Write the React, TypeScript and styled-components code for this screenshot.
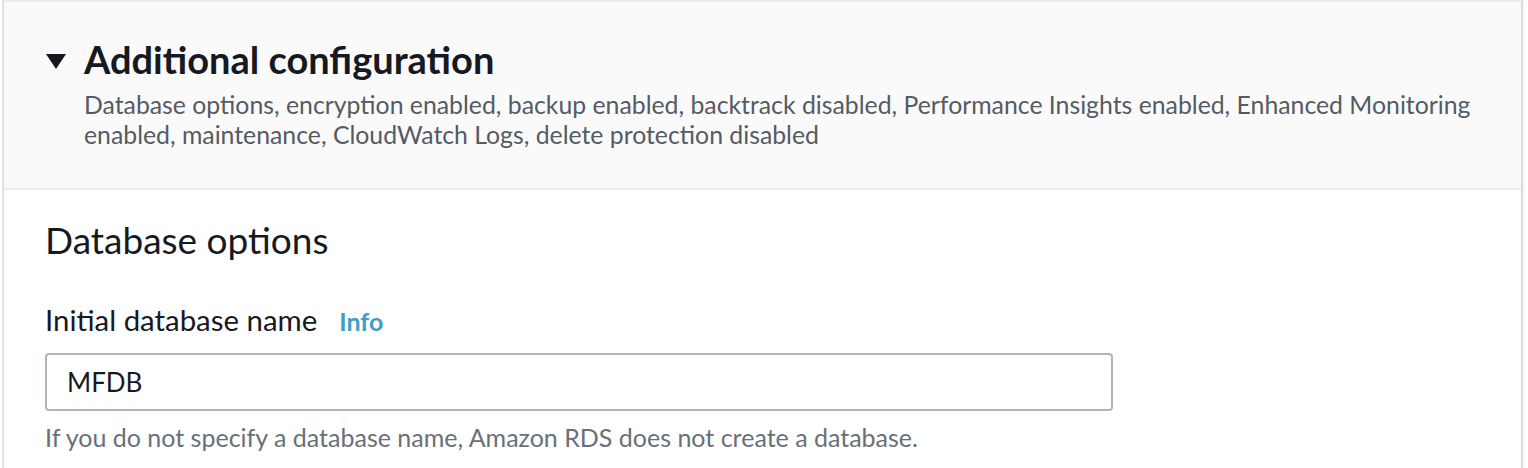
import React from "react";
import styled, { createGlobalStyle } from "styled-components";

const GlobalStyle = createGlobalStyle`
  html, body {
    margin: 0;
    padding: 0;
    background: #ffffff;
  }
  body {
    font-family: Lato, "Open Sans", "Noto Sans", sans-serif;
    -webkit-font-smoothing: antialiased;
  }
`;

const Page = styled.div`
  padding: 0 6px 0 3px;
  height: 468px;
  overflow: hidden;
`;

const Card = styled.section`
  border-top: 2px solid #eaeded;
  border-left: 1px solid #d5dbdb;
  border-right: 1px solid #d5dbdb;
  box-shadow: 1px 0 2px rgba(0, 28, 36, 0.18), -1px 0 1px rgba(0, 28, 36, 0.08);
  background: #ffffff;
  min-height: 470px;
`;

const Header = styled.div`
  background: #fafafa;
  padding: 35px 30px 38px 42px;
  border-bottom: 2px solid #eaeded;
`;

const TitleRow = styled.div`
  display: flex;
  align-items: flex-start;
  gap: 18px;
`;

const Caret = styled.span`
  display: inline-block;
  width: 0;
  height: 0;
  border-left: 10px solid transparent;
  border-right: 10px solid transparent;
  border-top: 15px solid #16191f;
  margin-top: 17px;
`;

const Title = styled.h2`
  margin: 0;
  font-size: 38px;
  line-height: 44px;
  font-weight: 700;
  color: #16191f;
`;

const Description = styled.p`
  margin: 9px 0 0 38px;
  font-size: 24.8px;
  line-height: 30px;
  color: #545b64;
  white-space: nowrap;
`;

const Body = styled.div`
  padding: 28px 40px 0 41px;
`;

const SectionTitle = styled.h3`
  margin: 0;
  font-size: 37px;
  line-height: 44px;
  font-weight: 400;
  color: #16191f;
`;

const Field = styled.div`
  margin-top: 40px;
  display: flex;
  flex-direction: column;
`;

const LabelRow = styled.div`
  display: flex;
  align-items: baseline;
  gap: 22px;
`;

const Label = styled.label`
  font-size: 29.4px;
  line-height: 36px;
  color: #16191f;
`;

const InfoLink = styled.a`
  font-size: 25px;
  font-weight: 700;
  color: #3f9dcb;
  text-decoration: none;
`;

const Input = styled.input`
  margin-top: 15px;
  box-sizing: border-box;
  width: 1068px;
  height: 58px;
  border: 2px solid #aab7b8;
  border-radius: 4px;
  padding: 0 20px;
  font-family: inherit;
  font-size: 26px;
  color: #16191f;
  background: #ffffff;
  outline: none;
`;

const Hint = styled.p`
  margin: 11px 0 0;
  font-size: 25px;
  line-height: 30px;
  color: #687078;
`;

export default function App() {
  return (
    <>
      <GlobalStyle />
      <Page>
        <Card>
          <Header>
            <TitleRow>
              <Caret />
              <Title>Additional configuration</Title>
            </TitleRow>
            <Description>
              Database options, encryption enabled, backup enabled, backtrack disabled, Performance Insights enabled, Enhanced Monitoring
              <br />
              enabled, maintenance, CloudWatch Logs, delete protection disabled
            </Description>
          </Header>
          <Body>
            <SectionTitle>Database options</SectionTitle>
            <Field>
              <LabelRow>
                <Label htmlFor="dbname">Initial database name</Label>
                <InfoLink href="#">Info</InfoLink>
              </LabelRow>
              <Input id="dbname" defaultValue="MFDB" readOnly />
              <Hint>If you do not specify a database name, Amazon RDS does not create a database.</Hint>
            </Field>
          </Body>
        </Card>
      </Page>
    </>
  );
}
